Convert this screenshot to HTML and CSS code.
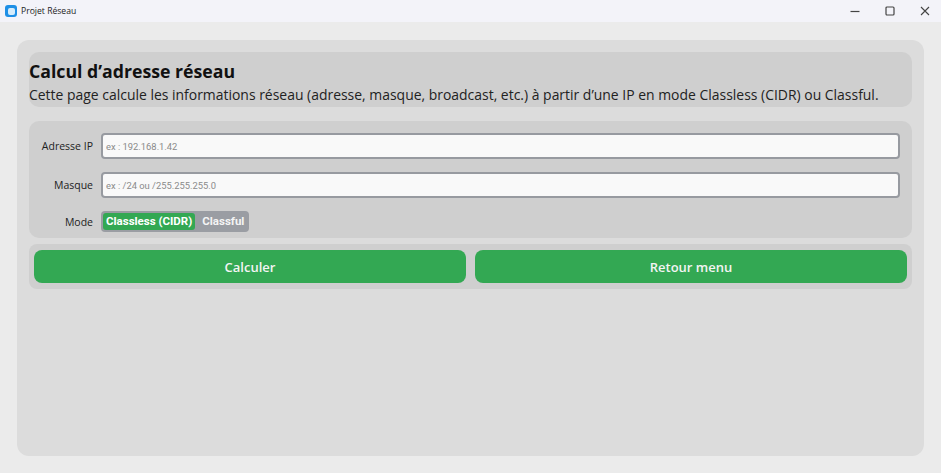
FILE: index.html
```html
<!DOCTYPE html>
<html lang="fr">
<head>
    <meta charset="UTF-8">
    <title>Projet Réseau</title>
    <link rel="stylesheet" href="styles.css">
</head>
<body>
    <div class="titlebar">
        <div class="app-title">
            <span class="app-icon"><span class="app-icon-inner"></span></span>
            <span>Projet Réseau</span>
        </div>
        <div class="window-controls">
            <svg width="12" height="12" viewBox="0 0 12 12"><path d="M1.5 6.5h9" stroke="#444" stroke-width="1.2" fill="none"/></svg>
            <svg width="12" height="12" viewBox="0 0 12 12"><rect x="2" y="2" width="8" height="8" rx="1" stroke="#444" stroke-width="1.2" fill="none"/></svg>
            <svg width="12" height="12" viewBox="0 0 12 12"><path d="M2 2l8 8M10 2l-8 8" stroke="#444" stroke-width="1.1" fill="none"/></svg>
        </div>
    </div>

    <div class="content">
        <div class="panel">
            <div class="header">
                <h1>Calcul d’adresse réseau</h1>
                <p>Cette page calcule les informations réseau (adresse, masque, broadcast, etc.) à partir d’une IP en mode Classless (CIDR) ou Classful.</p>
            </div>

            <form class="form">
                <div class="form-row">
                    <label>Adresse IP</label>
                    <input type="text" placeholder="ex : 192.168.1.42">
                </div>
                <div class="form-row">
                    <label>Masque</label>
                    <input type="text" placeholder="ex : /24 ou /255.255.255.0">
                </div>
                <div class="form-row">
                    <label>Mode</label>
                    <div class="toggle">
                        <span class="toggle-item active">Classless (CIDR)</span>
                        <span class="toggle-item">Classful</span>
                    </div>
                </div>
            </form>

            <div class="actions">
                <button type="button">Calculer</button>
                <button type="button">Retour menu</button>
            </div>
        </div>
    </div>
</body>
</html>
```

FILE: styles.css
```css
* {
    margin: 0;
    padding: 0;
    box-sizing: border-box;
}

html, body {
    height: 100%;
}

body {
    background: #ebebeb;
    font-family: 'Open Sans', 'Noto Sans', sans-serif;
    color: #1a1a1a;
    display: flex;
    flex-direction: column;
    overflow: hidden;
}

.titlebar {
    height: 22px;
    background: #f3f3f9;
    display: flex;
    justify-content: space-between;
    align-items: center;
    padding-left: 5px;
}

.app-title {
    display: flex;
    align-items: center;
    gap: 4px;
    font-size: 8.6px;
    color: #222;
}

.app-icon {
    width: 12px;
    height: 12px;
    border-radius: 3px;
    background: #1e8fe6;
    display: flex;
    align-items: center;
    justify-content: center;
}

.app-icon-inner {
    width: 7px;
    height: 7px;
    border-radius: 2px;
    background: #d5ecfc;
}

.window-controls {
    display: flex;
    gap: 23px;
    padding-right: 10px;
}

.content {
    flex: 1;
    padding: 18px 17px 17px;
}

.panel {
    height: 100%;
    background: #dcdcdc;
    border-radius: 12px;
    padding: 12px;
    display: flex;
    flex-direction: column;
}

.header {
    height: 55px;
    background: #cfcfcf;
    border-radius: 10px;
    padding-top: 8px;
    margin-bottom: 14px;
}

h1 {
    font-size: 17.7px;
    line-height: 23px;
    font-weight: 700;
    color: #111;
}

.header p {
    margin-top: 1px;
    font-size: 13.95px;
    line-height: 22px;
    color: #222;
    white-space: nowrap;
}

.form {
    height: 117px;
    background: #cfcfcf;
    border-radius: 10px;
    padding: 12px 12px 0;
    display: flex;
    flex-direction: column;
    gap: 13px;
    margin-bottom: 6px;
}

.form-row {
    display: flex;
    align-items: center;
    gap: 8px;
}

.form-row label {
    width: 52px;
    text-align: right;
    font-size: 10.5px;
    color: #222;
    white-space: nowrap;
    flex-shrink: 0;
}

.form-row input {
    flex: 1;
    height: 26px;
    border: 2px solid #979aa0;
    border-radius: 4px;
    background: #f9f9f9;
    padding: 0 3px;
    font-family: Roboto, sans-serif;
    font-size: 9.4px;
    outline: none;
}

.form-row input::placeholder {
    color: #8a8a8a;
}

.toggle {
    display: flex;
    align-items: center;
    background: #9a9da3;
    border-radius: 4px;
    height: 21px;
    padding: 2px;
}

.toggle-item {
    font-family: Roboto, sans-serif;
    font-size: 11.5px;
    font-weight: 700;
    color: #f4f4f4;
    padding: 0 3px 0 5px;
    line-height: 17px;
}

.toggle-item.active {
    background: #33a853;
    border-radius: 3px;
    color: #fff;
    padding: 0 3px;
    margin-right: 2px;
}

.actions {
    height: 45px;
    background: #cfcfcf;
    border-radius: 8px;
    padding: 6px 5px;
    display: flex;
    gap: 9px;
}

.actions button {
    flex: 1;
    border: none;
    border-radius: 8px;
    background: #33a853;
    color: #f4f4f4;
    font-family: 'Open Sans', sans-serif;
    font-size: 13px;
    font-weight: 600;
    cursor: pointer;
}
```
